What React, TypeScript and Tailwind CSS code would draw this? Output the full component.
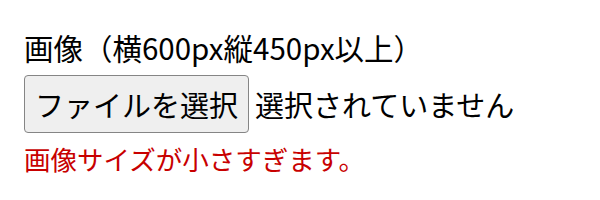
import React from 'react';

const App: React.FC = () => {
  return (
    <div className="w-[600px] h-[200px] bg-white pl-[24px] pt-[28px] font-['Noto_Sans_CJK_JP','Noto_Sans',sans-serif] text-black">
      {/* ラベル */}
      <div className="text-[29.5px] leading-[38px]">画像（横600px縦450px以上）</div>

      {/* ファイル選択 */}
      <div className="mt-[9px] flex items-center text-[29px]">
        <button
          type="button"
          className="h-[58px] px-[10px] bg-[#efefef] border border-[#858585] rounded-[4px] leading-none text-black"
        >
          ファイルを選択
        </button>
        <span className="ml-[6px] leading-none">選択されていません</span>
      </div>

      {/* エラー */}
      <div className="mt-[7px] text-[26.5px] leading-[38px] text-[#c80000]">画像サイズが小さすぎます。</div>
    </div>
  );
};

export default App;
